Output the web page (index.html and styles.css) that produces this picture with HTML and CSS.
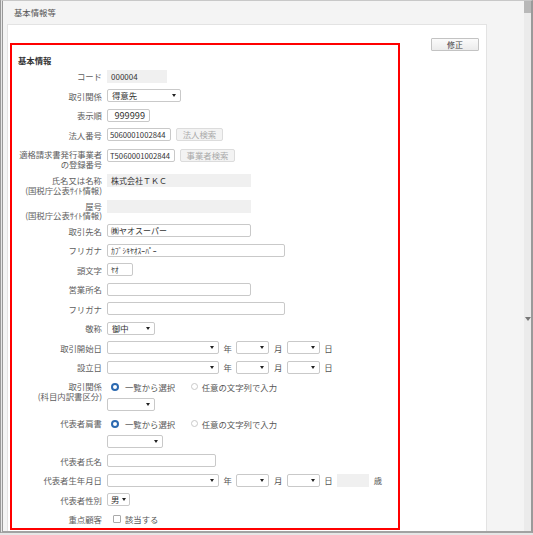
FILE: index.html
```html
<!DOCTYPE html>
<html lang="ja">
<head>
<meta charset="utf-8">
<title>基本情報等</title>
<link rel="stylesheet" href="styles.css">
</head>
<body>
<div class="window">
  <div class="main">
    <div class="title">基本情報等</div>
    <div class="card">
      <div class="section">
        <div class="section-title">基本情報</div>
        <div class="form">
          <div class="row">
            <div class="label">コード</div>
            <div class="field"><div class="ro w60">000004</div></div>
          </div>
          <div class="row">
            <div class="label">取引関係</div>
            <div class="field"><div class="select w74"><span>得意先</span><span class="caret"></span></div></div>
          </div>
          <div class="row">
            <div class="label">表示順</div>
            <div class="field"><div class="input w43 num">999999</div></div>
          </div>
          <div class="row">
            <div class="label">法人番号</div>
            <div class="field"><div class="input w64 digits">5060001002844</div><div class="btn-dis w47">法人検索</div></div>
          </div>
          <div class="row tall">
            <div class="label narrow"><span class="line">適格請求書発行事業者</span><span class="line">の登録番号</span></div>
            <div class="field"><div class="input w68 digits">T5060001002844</div><div class="btn-dis w55">事業者検索</div></div>
          </div>
          <div class="row tall">
            <div class="label"><span class="line">氏名又は名称</span><span class="line">(国税庁公表ｻｲﾄ情報)</span></div>
            <div class="field"><div class="ro w144">株式会社ＴＫＣ</div></div>
          </div>
          <div class="row tall">
            <div class="label"><span class="line">屋号</span><span class="line">(国税庁公表ｻｲﾄ情報)</span></div>
            <div class="field"><div class="ro w144"></div></div>
          </div>
          <div class="row">
            <div class="label">取引先名</div>
            <div class="field"><div class="input w144">㈱ヤオスーパー</div></div>
          </div>
          <div class="row">
            <div class="label">フリガナ</div>
            <div class="field"><div class="input w178 kana">ｶﾌﾞｼｷﾔｵｽｰﾊﾟｰ</div></div>
          </div>
          <div class="row">
            <div class="label">頭文字</div>
            <div class="field"><div class="input w26 kana">ﾔｵ</div></div>
          </div>
          <div class="row">
            <div class="label">営業所名</div>
            <div class="field"><div class="input w144"></div></div>
          </div>
          <div class="row">
            <div class="label">フリガナ</div>
            <div class="field"><div class="input w178"></div></div>
          </div>
          <div class="row">
            <div class="label">敬称</div>
            <div class="field"><div class="select w48"><span>御中</span><span class="caret"></span></div></div>
          </div>
          <div class="row">
            <div class="label">取引開始日</div>
            <div class="field date">
              <div class="select w112"><span></span><span class="caret"></span></div><span class="unit">年</span>
              <div class="select w33"><span></span><span class="caret"></span></div><span class="unit">月</span>
              <div class="select w33"><span></span><span class="caret"></span></div><span class="unit">日</span>
            </div>
          </div>
          <div class="row">
            <div class="label">設立日</div>
            <div class="field date">
              <div class="select w112"><span></span><span class="caret"></span></div><span class="unit">年</span>
              <div class="select w33"><span></span><span class="caret"></span></div><span class="unit">月</span>
              <div class="select w33"><span></span><span class="caret"></span></div><span class="unit">日</span>
            </div>
          </div>
          <div class="row choice">
            <div class="label"><span class="line">取引関係</span><span class="line">(科目内訳書区分)</span></div>
            <div class="stack">
              <div class="radios">
                <span class="opt first"><span class="radio on"></span>一覧から選択</span>
                <span class="opt second"><span class="radio"></span>任意の文字列で入力</span>
              </div>
              <div class="select w48"><span></span><span class="caret"></span></div>
            </div>
          </div>
          <div class="row choice">
            <div class="label"><span class="line">代表者肩書</span></div>
            <div class="stack">
              <div class="radios">
                <span class="opt first"><span class="radio on"></span>一覧から選択</span>
                <span class="opt second"><span class="radio"></span>任意の文字列で入力</span>
              </div>
              <div class="select w56"><span></span><span class="caret"></span></div>
            </div>
          </div>
          <div class="row">
            <div class="label">代表者氏名</div>
            <div class="field"><div class="input w109"></div></div>
          </div>
          <div class="row">
            <div class="label">代表者生年月日</div>
            <div class="field date">
              <div class="select w112"><span></span><span class="caret"></span></div><span class="unit">年</span>
              <div class="select w33"><span></span><span class="caret"></span></div><span class="unit">月</span>
              <div class="select w33"><span></span><span class="caret"></span></div><span class="unit">日</span>
              <div class="ro w32"></div><span class="unit">歳</span>
            </div>
          </div>
          <div class="row">
            <div class="label">代表者性別</div>
            <div class="field"><div class="select w23 tight"><span>男</span><span class="caret"></span></div></div>
          </div>
          <div class="row">
            <div class="label">重点顧客</div>
            <div class="field checkline"><span class="check"></span><span>該当する</span></div>
          </div>
        </div>
      </div>
      <div class="btn">修正</div>
    </div>
  </div>
  <div class="scroll">
    <div class="thumb"></div>
    <div class="arrow"></div>
  </div>
</div>
</body>
</html>
```
FILE: styles.css
```css
* { box-sizing: border-box; }
html, body { margin: 0; padding: 0; }
body {
  width: 533px;
  height: 535px;
  overflow: hidden;
  background: #e6e6e6;
  font-family: "Noto Sans CJK JP", "Noto Sans", sans-serif;
  font-size: 8.4px;
  color: #555;
}
.window {
  display: flex;
  height: 533px;
  border-left: 3px double #999;
  border-right: 2px solid #9a9a9a;
  border-bottom: 2px solid #a2a2a2;
  border-top: 1px solid #c8c8c8;
}
.main {
  flex: 1;
  min-width: 0;
  background: #f4f4f4;
  display: flex;
  flex-direction: column;
}
.title {
  height: 23px;
  line-height: 23px;
  padding-left: 11px;
  color: #555;
}
.card {
  flex: 1;
  margin-left: 4px;
  width: 480px;
  background: #fff;
  border: 1px solid #e3e3e3;
  border-bottom: none;
  display: flex;
  align-items: flex-start;
}
.scroll {
  width: 7px;
  background: #ebebeb;
  display: flex;
  flex-direction: column;
  align-items: center;
}
.thumb { width: 7px; height: 12px; background: #b8b8b8; }
.arrow {
  margin-top: 304px;
  width: 0; height: 0;
  border-left: 3px solid transparent;
  border-right: 3px solid transparent;
  border-top: 4px solid #777;
}
.btn {
  margin: 13px 0 0 31px;
  width: 48px;
  height: 13px;
  border: 1px solid #c3c3c3;
  border-radius: 1px;
  background: linear-gradient(#fbfbfb, #ebebeb);
  text-align: center;
  line-height: 11px;
  font-size: 8px;
  color: #444;
}
.section {
  margin: 18px 0 0 2px;
  width: 390px;
  height: 487px;
  border: 2px solid #f00;
}
.section-title {
  padding: 10px 0 1.25px 6px;
  line-height: 10px;
  font-weight: bold;
  color: #333;
}
.form { display: flex; flex-direction: column; }
.row {
  display: grid;
  grid-template-columns: 90px auto;
  column-gap: 5px;
  height: 19.5px;
  align-items: center;
}
.label {
  text-align: right;
  color: #5e5e5e;
  line-height: 10px;
  white-space: nowrap;
}
.label .line { display: block; height: 9.6px; line-height: 9.6px; }
.narrow { letter-spacing: -0.1px; }
.row.tall { height: 25.67px; align-items: start; }
.row.tall .label { padding-top: 6px; }
.row.tall .field { padding-top: 4.5px; }
.row.choice { height: 37px; align-items: start; }
.row.choice .label { padding-top: 5px; }
.field {
  display: flex;
  align-items: center;
  gap: 5px;
}
.field.date { gap: 4.5px; }
.unit { color: #555; line-height: 10px; }
.stack { display: flex; flex-direction: column; align-items: flex-start; }
.radios {
  height: 19.5px;
  display: flex;
  align-items: center;
  color: #555;
}
.stack .select { margin-top: 1.5px; }
.opt { display: flex; align-items: center; line-height: 10px; white-space: nowrap; }
.opt.first { margin-left: 4px; }
.opt.first .radio { margin-right: 6px; }
.opt.second { margin-left: 15.5px; }
.opt.second .radio { margin-right: 4px; }
.radio {
  width: 7px;
  height: 7px;
  border-radius: 50%;
  border: 1px solid #c9c9c9;
  background: #fff;
}
.radio.on {
  width: 8px;
  height: 8px;
  border: 2.4px solid #2c69b0;
}
.input {
  height: 13px;
  border: 1px solid #c9c9c9;
  border-radius: 2px;
  background: #fff;
  padding: 0 3px;
  line-height: 11px;
  font-size: 8px;
  color: #333;
  white-space: nowrap;
  overflow: hidden;
}
.input.digits { font-size: 7.7px; padding: 0 2px; }
.input.num { text-align: right; font-size: 9.2px; padding-right: 4px; }
.input.kana { font-size: 7.6px; }
.ro {
  height: 13px;
  background: #f0f0f0;
  padding: 0 4px;
  line-height: 13px;
  color: #333;
  font-size: 8px;
  white-space: nowrap;
}
.select {
  height: 13px;
  border: 1px solid #c9c9c9;
  border-radius: 2px;
  background: #fff;
  display: flex;
  align-items: center;
  justify-content: space-between;
  padding: 0 4px;
  color: #333;
  line-height: 11px;
}
.select.tight { padding: 0 3px; }
.caret {
  width: 0;
  height: 0;
  border-left: 2px solid transparent;
  border-right: 2px solid transparent;
  border-top: 3px solid #222;
}
.btn-dis {
  height: 13px;
  border: 1px solid #dcdcdc;
  border-radius: 2px;
  background: #f3f3f3;
  color: #aaa;
  text-align: center;
  line-height: 11px;
  white-space: nowrap;
}
.checkline { padding-left: 6px; gap: 4px; }
.check {
  width: 8px;
  height: 8px;
  border: 1px solid #aaa;
  border-radius: 1px;
  background: #fff;
}
.w23 { width: 23px; }
.w26 { width: 26px; }
.w32 { width: 32px; }
.w33 { width: 33px; }
.w43 { width: 43px; }
.w47 { width: 47px; }
.w48 { width: 48px; }
.w55 { width: 55px; }
.w56 { width: 56px; }
.w60 { width: 60px; }
.w64 { width: 64px; }
.w68 { width: 68px; }
.w74 { width: 74px; }
.w109 { width: 109px; }
.w112 { width: 112px; }
.w144 { width: 144px; }
.w178 { width: 178px; }
```
